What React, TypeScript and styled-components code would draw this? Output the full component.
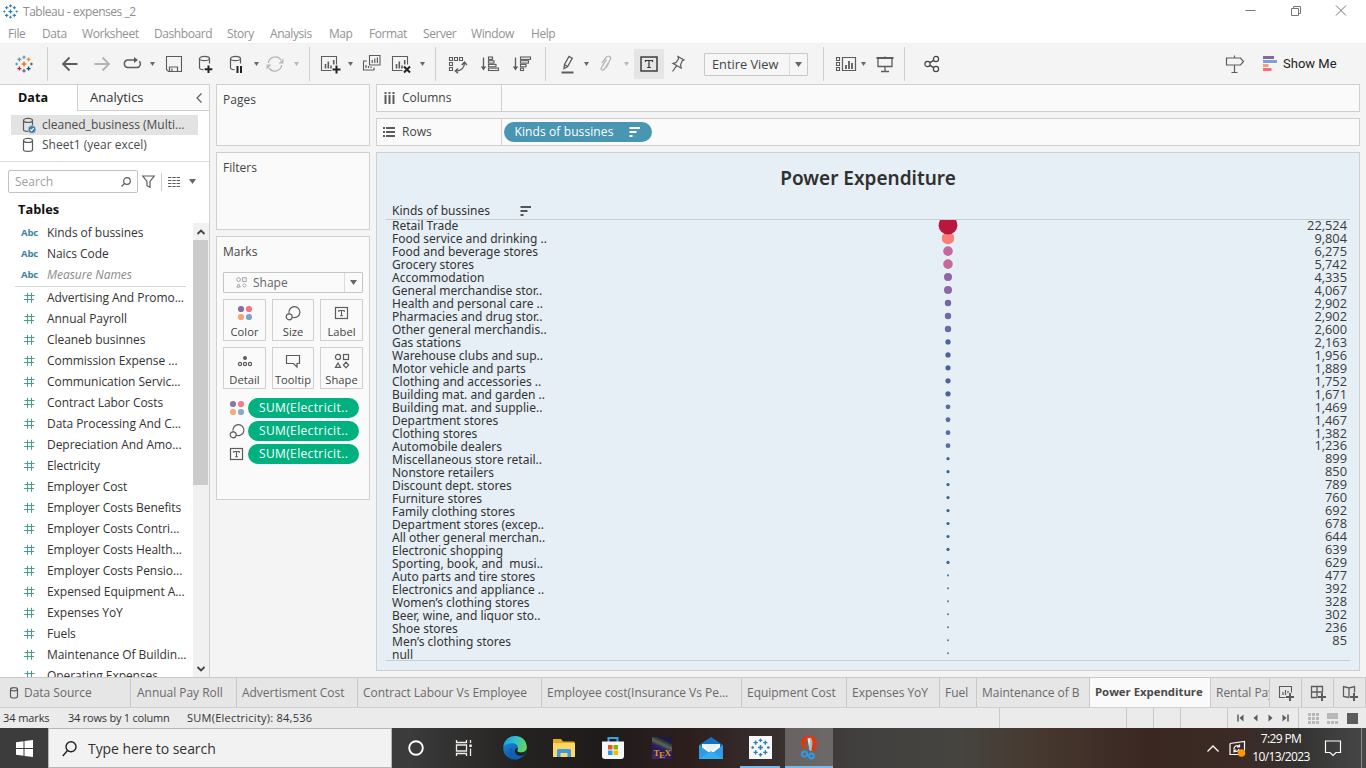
import React from 'react';
import styled, { createGlobalStyle } from 'styled-components';

const Global = createGlobalStyle`
  * { box-sizing: border-box; }
  html, body { margin: 0; padding: 0; }
  body { width: 1366px; height: 768px; overflow: hidden; background: #f4f4f4; }
  svg { display: block; flex: none; overflow: visible; }
`;

const LINE = '#d0d0d0';
const INK = '#5c5c5c';

const Window = styled.div`
  width: 1366px;
  height: 768px;
  display: flex;
  flex-direction: column;
  overflow: hidden;
  font: 12px/16px 'Open Sans', 'Noto Sans', sans-serif;
  color: #444;
  white-space: pre;
`;

/* ---------- title and menu ---------- */

const TitleBar = styled.div`
  height: 23px;
  flex: none;
  display: flex;
  align-items: center;
  background: #fff;
  padding: 0 20px 0 3px;
  color: #8f8f8f;
  letter-spacing: -0.46px;
`;
const TitleText = styled.div`
  margin-left: 5px;
  flex: 1;
`;
const WindowButtons = styled.div`
  display: flex;
  gap: 34px;
  padding-bottom: 3px;
`;
const MenuBar = styled.div`
  height: 20px;
  flex: none;
  display: flex;
  align-items: center;
  background: #fff;
  padding: 1px 0 0 8px;
  color: #929292;
  letter-spacing: -0.42px;
`;
const MenuItem = styled.div<{ $w: number }>`
  width: ${p => p.$w}px;
`;

/* ---------- toolbar ---------- */

const Toolbar = styled.div`
  height: 41px;
  flex: none;
  display: flex;
  align-items: center;
  background: #f4f4f4;
  border-top: 1px solid #f0f0f0;
`;
const Slot = styled.div<{ $ml: number; $w?: number }>`
  margin-left: ${p => p.$ml}px;
  width: ${p => p.$w ?? 20}px;
  flex: none;
`;
const Divider = styled.div<{ $ml: number }>`
  margin-left: ${p => p.$ml}px;
  width: 1px;
  height: 34px;
  flex: none;
  background: #cfcfcf;
`;
const ActiveTool = styled.div`
  margin-left: 5px;
  width: 30px;
  height: 30px;
  display: flex;
  align-items: center;
  justify-content: center;
  background: #e5e5e5;
`;
const ViewSelect = styled.div`
  margin-left: 16px;
  width: 104px;
  height: 23px;
  display: flex;
  align-items: center;
  border: 1px solid #c8c8c8;
  border-radius: 1px;
  background: #f6f6f6;
  font-size: 12.8px;
  color: #444;
`;
const ViewSelectText = styled.div`
  flex: 1;
  padding-left: 7px;
`;
const SelectArrow = styled.div<{ $w: number }>`
  width: ${p => p.$w}px;
  height: 100%;
  display: flex;
  align-items: center;
  justify-content: center;
  border-left: 1px solid #dcdcdc;
`;
const ShowMe = styled.div`
  margin-left: 6px;
  font: 13px/16px Roboto, sans-serif;
  color: #222;
`;

/* ---------- data pane ---------- */

const Main = styled.div`
  height: 593px;
  flex: none;
  display: flex;
`;
const DataPane = styled.div`
  width: 210px;
  display: flex;
  flex-direction: column;
  background: #fff;
  border-right: 1px solid ${LINE};
  overflow: hidden;
`;
const PaneTabs = styled.div`
  height: 27px;
  flex: none;
  display: flex;
  border-top: 1px solid ${LINE};
  font-size: 13px;
  line-height: 25px;
`;
const DataTab = styled.div`
  width: 78px;
  padding-left: 18px;
  border-right: 1px solid ${LINE};
  font-weight: 700;
  font-size: 12.6px;
  color: #111;
`;
const AnalyticsTab = styled.div`
  flex: 1;
  display: flex;
  align-items: center;
  justify-content: space-between;
  padding: 0 7px 0 12px;
  background: #fafafa;
  border-bottom: 1px solid ${LINE};
  color: #333;
`;
const Sources = styled.div`
  height: 51px;
  flex: none;
  padding: 4px 11px 0;
  border-bottom: 1px solid #dcdcdc;
`;
const Source = styled.div<{ $active?: boolean }>`
  height: 20px;
  display: flex;
  align-items: center;
  gap: 6px;
  padding-left: 11px;
  background: ${p => (p.$active ? '#e3e3e3' : 'transparent')};
  color: #4c4c4c;
`;
const SearchRow = styled.div`
  height: 39px;
  flex: none;
  display: flex;
  align-items: center;
  padding-left: 8px;
`;
const SearchBox = styled.div`
  width: 130px;
  height: 23px;
  display: flex;
  align-items: center;
  justify-content: space-between;
  padding: 0 6px;
  border: 1px solid #c2c2c2;
  border-radius: 2px;
  color: #a0a0a0;
`;
const SmallDivider = styled.div`
  width: 1px;
  height: 18px;
  margin: 0 6px;
  background: #cfcfcf;
`;
const TablesHeading = styled.div`
  height: 21px;
  flex: none;
  padding-left: 18px;
  font-size: 12.8px;
  font-weight: 700;
  color: #111;
`;
const FieldArea = styled.div`
  flex: 1;
  min-height: 0;
  display: flex;
`;
const Fields = styled.div`
  flex: 1;
  overflow: hidden;
  letter-spacing: -0.05px;
`;
const Field = styled.div<{ $muted?: boolean }>`
  height: 21px;
  display: grid;
  grid-template-columns: 26px 1fr;
  align-items: center;
  padding: 1px 0 0 21px;
  color: ${p => (p.$muted ? '#8a8a8a' : '#333')};
  font-style: ${p => (p.$muted ? 'italic' : 'normal')};
`;
const Abc = styled.span`
  font: 700 9.6px/14px 'Open Sans', sans-serif;
  letter-spacing: -0.2px;
  color: #3f7f9f;
`;
const FieldRule = styled.div`
  height: 1px;
  margin: 1px 7px 0 15px;
  background: #d8d8d8;
`;
const ScrollBar = styled.div`
  width: 16px;
  margin-top: 1px;
  display: flex;
  flex-direction: column;
  align-items: center;
  background: #f1f1f1;
`;
const ScrollThumb = styled.div`
  width: 15px;
  height: 245px;
  margin-bottom: auto;
  align-self: flex-start;
  background: #cbcbcb;
`;
const ScrollArrow = styled.div`
  height: 17px;
  display: flex;
  align-items: center;
`;

/* ---------- cards ---------- */

const Cards = styled.div`
  width: 154px;
  margin-left: 6px;
  display: flex;
  flex-direction: column;
  gap: 6px;
`;
const Card = styled.div<{ $h: number }>`
  height: ${p => p.$h}px;
  padding: 7px 6px 0;
  border: 1px solid ${LINE};
  background: #fafafa;
`;
const MarkSelect = styled.div`
  height: 21px;
  margin-top: 12px;
  display: flex;
  align-items: center;
  border: 1px solid #c6c6c6;
  border-radius: 1px;
  padding-left: 11px;
  color: #666;
`;
const MarkSelectText = styled.div`
  flex: 1;
  padding-left: 5px;
`;
const MarkButtons = styled.div`
  margin-top: 6px;
  display: grid;
  grid-template-columns: 43px 42px 43px;
  grid-auto-rows: 42px;
  gap: 6px;
`;
const MarkButton = styled.div`
  border: 1px solid ${LINE};
  display: flex;
  flex-direction: column;
  align-items: center;
  padding-top: 4px;
  gap: 2px;
  font-size: 11.2px;
  color: #444;
`;
const MarkRow = styled.div`
  height: 23px;
  display: flex;
  align-items: center;
  padding-left: 5px;
`;
const MarkRows = styled.div`
  padding-top: 7px;
`;
const GreenPill = styled.div`
  width: 111px;
  height: 20px;
  margin-left: 1px;
  padding-left: 11px;
  border-radius: 10px;
  background: #00b180;
  color: #fff;
  font-size: 12px;
  line-height: 19px;
  letter-spacing: 0.36px;
`;

/* ---------- shelves and view ---------- */

const Workspace = styled.div`
  width: 984px;
  margin-left: 6px;
  display: flex;
  flex-direction: column;
  gap: 6px;
`;
const Shelf = styled.div`
  height: 28px;
  flex: none;
  display: flex;
  align-items: center;
  border: 1px solid ${LINE};
  background: #fafafa;
`;
const ShelfLabel = styled.div`
  width: 125px;
  height: 100%;
  display: flex;
  align-items: center;
  gap: 6px;
  padding-left: 6px;
  border-right: 1px solid ${LINE};
`;
const BluePill = styled.div`
  width: 148px;
  height: 20px;
  margin-left: 2px;
  padding: 0 12px 0 10.5px;
  display: flex;
  align-items: center;
  justify-content: space-between;
  border-radius: 10px;
  background: #4996b2;
  color: #fff;
  letter-spacing: 0.1px;
`;
const View = styled.div`
  height: 519px;
  display: flex;
  flex-direction: column;
  border: 1px solid ${LINE};
  background: #e6eff5;
  padding: 0 9px;
  color: #333;
`;
const ViewTitle = styled.div`
  height: 49px;
  padding-top: 13px;
  text-align: center;
  font-size: 19px;
  font-family: 'Noto Sans', sans-serif;
  line-height: 24px;
  font-weight: 600;
  color: #303030;
`;
const HeaderRow = styled.div`
  height: 18px;
  display: flex;
  align-items: center;
  gap: 30px;
  padding-left: 6px;
  border-bottom: 1px solid #c6ccd0;
  font-family: 'Noto Sans', sans-serif;
`;
const Plot = styled.div`
  height: 441px;
  display: flex;
  border-bottom: 1px solid #c6ccd0;
`;
const RowLabels = styled.div`
  width: 161px;
  padding-left: 6px;
  margin-top: -1px;
  font: 12px/13px 'Noto Sans', sans-serif;
`;
const Marks = styled.div`
  flex: 1;
  overflow: hidden;
`;
const Values = styled.div`
  width: 60px;
  padding-right: 3px;
  margin-top: -1px;
  text-align: right;
  font-size: 12.8px;
  line-height: 12.97px;
  color: #3a3a3a;
`;

/* ---------- sheet tabs and status ---------- */

const SheetTabs = styled.div`
  height: 31px;
  flex: none;
  display: flex;
  border-top: 1px solid #c9c9c9;
  border-bottom: 1px solid ${LINE};
  background: #e6e6e6;
  line-height: 29px;
  letter-spacing: -0.03px;
  color: #6a6a6a;
`;
const SheetTab = styled.div<{ $w: number; $active?: boolean; $pl?: number }>`
  width: ${p => p.$w}px;
  flex: none;
  display: flex;
  overflow: hidden;
  padding-left: ${p => p.$pl ?? 5}px;
  border-right: 1px solid #c9c9c9;
  background: ${p => (p.$active ? '#fafafa' : 'transparent')};
  font-weight: ${p => (p.$active ? 700 : 400)};
  font-size: ${p => (p.$active ? 11.4 : 12)}px;
  line-height: ${p => (p.$active ? 27 : 29)}px;
  align-items: ${p => (p.$active ? 'flex-start' : 'center')};
  color: ${p => (p.$active ? '#4a4a4a' : 'inherit')};
`;
const NewSheet = styled.div`
  width: 32.3px;
  display: flex;
  align-items: center;
  justify-content: center;
  border-right: 1px solid #c9c9c9;
`;
const StatusBar = styled.div`
  height: 20px;
  flex: none;
  display: flex;
  background: #ebebeb;
  font-size: 11px;
  line-height: 20px;
  color: #333;
`;
const StatusText = styled.div<{ $w: number; $ls: number }>`
  width: ${p => p.$w}px;
  letter-spacing: ${p => p.$ls}px;
`;
const StatusCell = styled.div<{ $w: number }>`
  width: ${p => p.$w}px;
  display: flex;
  align-items: center;
  justify-content: space-evenly;
  border-left: 1px solid #c9c9c9;
`;

/* ---------- taskbar ---------- */

const TaskBar = styled.div`
  height: 40px;
  flex: none;
  display: flex;
  background: linear-gradient(90deg, #3c3c3c 0, #3b3b3b 410px, #242220 520px, #1f1b1b 600px, #2d1f1e 690px, #42403f 860px, #46443f 960px, #46382f 1040px, #3a2721 1150px, #3b2a25 1240px, #343332 1300px, #474747 1366px);
`;
const StartButton = styled.div`
  width: 48px;
  display: flex;
  align-items: center;
  justify-content: center;
`;
const TaskSearch = styled.div`
  width: 344px;
  display: flex;
  align-items: center;
  gap: 11px;
  padding: 1px 0 0 13px;
  background: #f2f2f2;
  border: 1px solid #b5b5b5;
  font-size: 14px;
  letter-spacing: -0.06px;
  color: #333;
`;
const TaskItem = styled.div<{ $w: number; $line?: boolean; $active?: boolean; $mx?: string }>`
  width: ${p => p.$w}px;
  margin: ${p => p.$mx ?? '0'};
  height: 40px;
  display: flex;
  align-items: center;
  justify-content: center;
  background: ${p => (p.$active ? 'rgba(255,255,255,.24)' : 'transparent')};
  border-bottom: ${p => (p.$line ? '2px solid #76b9ed' : '0')};
`;
const TexTile = styled.div`
  width: 20px;
  height: 22px;
  display: flex;
  align-items: flex-end;
  justify-content: center;
  background: linear-gradient(205deg, #1b1b40 20%, #5a6a4c 38%, #2c2168 50%, #251a58 62%, #4a2b6e);
  color: #d79a1e;
  font: 700 9px/12px 'Liberation Serif', serif;
  letter-spacing: -0.5px;
`;
const LowE = styled.span`
  position: relative;
  top: 2px;
`;
const Tray = styled.div`
  margin-left: auto;
  display: flex;
  align-items: center;
  padding-right: 4px;
`;
const Clock = styled.div`
  width: 74px;
  margin-left: -2px;
  text-align: center;
  color: #fff;
  font-size: 12px;
  line-height: 18px;
  letter-spacing: -0.62px;
`;
const DesktopEdge = styled.div`
  width: 1px;
  height: 40px;
  margin-left: 20px;
  background: #888;
`;

/* ---------- icons ---------- */

type IconProps = { w?: number; h?: number; c?: string; children: React.ReactNode };
const Icon = ({ w = 20, h = 20, c = INK, children }: IconProps) => (
  <svg width={w} height={h} viewBox={`0 0 ${w} ${h}`} fill="none" stroke={c} strokeWidth={1.2}>
    {children}
  </svg>
);

const Caret = ({ c = '#666', s = 5 }: { c?: string; s?: number }) => (
  <svg width={s} height={s === 5 ? 4 : 5} viewBox="0 0 8 5" preserveAspectRatio="none">
    <path d="M0 0H8L4 5Z" fill={c} />
  </svg>
);

const plus = (x: number, y: number, s: number) => `M${x - s} ${y}h${2 * s}M${x} ${y - s}v${2 * s}`;

const TableauMark = ({ size, colors }: { size: number; colors: string[] }) => (
  <svg width={size} height={size} viewBox="0 0 18 18" fill="none" strokeWidth={1.3}>
    <path d={plus(9, 9, 2.4)} stroke={colors[0]} strokeWidth={1.5} />
    <path d={plus(9, 2.2, 1.7)} stroke={colors[1]} />
    <path d={plus(9, 15.8, 1.7)} stroke={colors[2]} />
    <path d={plus(4.4, 4.4, 2)} stroke={colors[3]} />
    <path d={plus(13.6, 4.4, 2)} stroke={colors[4]} />
    <path d={plus(4.4, 13.6, 2)} stroke={colors[5]} />
    <path d={plus(13.6, 13.6, 2)} stroke={colors[6]} />
    <path d={plus(1.6, 9, 1.3)} stroke={colors[1]} />
    <path d={plus(16.4, 9, 1.3)} stroke={colors[2]} />
  </svg>
);
const BRAND = ['#e8762d', '#7299a6', '#5b6591', '#5b9bb0', '#eb912b', '#c72037', '#1f447e'];
const BLUES = Array(7).fill('#2f7fb5') as string[];

const Database = ({ children }: { children?: React.ReactNode }) => (
  <Icon>
    <path d="M3.5 4.5v9.2c0 1 1.4 1.8 4 1.9M13.5 4.5v5" />
    <ellipse cx="8.5" cy="4.5" rx="5" ry="2.2" />
    {children}
  </Icon>
);
const SourceIcon = ({ checked }: { checked?: boolean }) => (
  <Icon w={14} h={16}>
    <path d="M1.5 3.4v9.4c0 2.2 9 2.2 9 0V3.4" />
    <ellipse cx="6" cy="3.4" rx="4.5" ry="2" />
    {checked && (
      <>
        <circle cx="10" cy="12.4" r="3.9" fill="#3b7f9f" stroke="#e3e3e3" strokeWidth=".6" />
        <path d="M8.2 12.4l1.3 1.3 2.3-2.6" stroke="#fff" />
      </>
    )}
  </Icon>
);
const Sheet = ({ children }: { children?: React.ReactNode }) => (
  <Icon>
    <path d="M11.5 16.5h-10v-14h15v8" strokeWidth={1.1} />
    <path d="M5.5 10v4.500M8.300 7.500v7M11 11.500v3M13.700 6v4.500" strokeWidth={1.6} />
    {children}
  </Icon>
);
const ColorDots = ({ soft }: { soft?: boolean }) => (
  <svg width="18" height="18" viewBox="0 0 18 18" opacity={soft ? 0.92 : 1}>
    <circle cx="5" cy="5" r="3.1" fill="#876f9a" />
    <circle cx="13" cy="5" r="3.1" fill="#f9707f" />
    <circle cx="5" cy="13" r="3.1" fill="#f4a377" />
    <circle cx="13" cy="13" r="3.1" fill="#7ea3cc" />
  </svg>
);
const SizeIcon = () => (
  <Icon w={18} h={18}>
    <path d="M5.2 9.800a5.500 5.500 0 1 1 3.200 3.400" />
    <circle cx="5.2" cy="12.8" r="3" />
  </Icon>
);
const LabelIcon = () => (
  <Icon w={18} h={18}>
    <rect x="2.500" y="3.500" width="12" height="11" />
    <path d="M5.800 8V6.500h5.400V8M8.500 6.500v5.300M7.100 11.800h2.800" strokeWidth={1.1} />
  </Icon>
);
const ShapeIcon = ({ s = 18, c = INK }: { s?: number; c?: string }) => (
  <svg width={s} height={s} viewBox="0 0 18 18" fill="none" stroke={c} strokeWidth={1.2}>
    <circle cx="5" cy="5" r="2.6" />
    <rect x="10.5" y="2.5" width="5" height="5" />
    <path d="M2.500 15.4L5 11l2.500 4.400z" />
    <path d="M13 10.200l2.600 2.800-2.600 2.800-2.600-2.800z" />
  </svg>
);
const SortGlyph = ({ c }: { c: string }) => (
  <Icon w={11} h={10} c={c}>
    <path d="M.5 1h10.500M.5 5h7M.5 9h3" strokeWidth={1.8} />
  </Icon>
);
const HashIcon = () => (
  <Icon w={12} h={12} c="#3fa480">
    <path d="M1.500 3.500h10M1 7.500h10M4.500 .8v10M8.500 .8v10" strokeWidth={1} />
  </Icon>
);
const SortBars = ({ desc }: { desc?: boolean }) => {
  const ws = desc ? [10, 8, 5.5, 3] : [4, 5.5, 7.5, 10];
  return (
    <Icon>
      <path d="M3.500 3.500v11" strokeWidth={1.3} />
      <path d="M.8 12.500h5.400L3.500 16.500z" fill={INK} stroke="none" />
      {ws.map((w, i) => (
        <rect key={i} x="8.500" y={3 + i * 3.7} width={w} height="2.400" strokeWidth={1.1} />
      ))}
    </Icon>
  );
};

/* ---------- data ---------- */

const MENU: [string, number][] = [
  ['File', 34], ['Data', 40], ['Worksheet', 72], ['Dashboard', 73], ['Story', 43], ['Analysis', 59],
  ['Map', 40], ['Format', 54], ['Server', 48], ['Window', 60], ['Help', 40],
];
const MEASURES = [
  'Advertising And Promo...', 'Annual Payroll', 'Cleaneb businnes', 'Commission Expense ...',
  'Communication Servic...', 'Contract Labor Costs', 'Data Processing And C...', 'Depreciation And Amo...',
  'Electricity', 'Employer Cost', 'Employer Costs Benefits', 'Employer Costs Contri...',
  'Employer Costs Health...', 'Employer Costs Pensio...', 'Expensed Equipment A...', 'Expenses YoY',
  'Fuels', 'Maintenance Of Buildin...', 'Operating Expenses',
];
const ROWS: [string, string][] = [
  ['Retail Trade', '22,524'], ['Food service and drinking ..', '9,804'], ['Food and beverage stores', '6,275'],
  ['Grocery stores', '5,742'], ['Accommodation', '4,335'], ['General merchandise stor..', '4,067'],
  ['Health and personal care ..', '2,902'], ['Pharmacies and drug stor..', '2,902'],
  ['Other general merchandis..', '2,600'], ['Gas stations', '2,163'], ['Warehouse clubs and sup..', '1,956'],
  ['Motor vehicle and parts', '1,889'], ['Clothing and accessories ..', '1,752'],
  ['Building mat. and garden ..', '1,671'], ['Building mat. and supplie..', '1,469'],
  ['Department stores', '1,467'], ['Clothing stores', '1,382'], ['Automobile dealers', '1,236'],
  ['Miscellaneous store retail..', '899'], ['Nonstore retailers', '850'], ['Discount dept. stores', '789'],
  ['Furniture stores', '760'], ['Family clothing stores', '692'], ['Department stores (excep..', '678'],
  ['All other general merchan..', '644'], ['Electronic shopping', '639'], ['Sporting, book, and  musi..', '629'],
  ['Auto parts and tire stores', '477'], ['Electronics and appliance ..', '392'],
  ['Women’s clothing stores', '328'], ['Beer, wine, and liquor sto..', '302'], ['Shoe stores', '236'],
  ['Men’s clothing stores', '85'], ['null', ''],
];
const MARK_STEPS: [number, number, string][] = [
  [1, 9.4, '#b9173d'], [1, 6.2, '#fb7f78'], [2, 4.8, '#c5699d'], [2, 4, '#8f66a5'], [3, 3.2, '#7068a4'],
  [5, 2.6, '#4b6399'], [4, 2.4, '#5a6ca2'], [9, 1.6, '#386590'], [7, 1.05, '#5384a8'],
];
const MARKS = MARK_STEPS.flatMap(([n, r, c]) => Array.from({ length: n }, () => ({ r, c })));
const SHEETS: [string, number, number?][] = [
  ['Annual Pay Roll', 106, 6], ['Advertisment Cost', 121], ['Contract Labour Vs Employee', 184],
  ['Employee cost(Insurance Vs Pe...', 200], ['Equipment Cost', 105], ['Expenses YoY', 93], ['Fuel', 37],
  ['Maintenance of B', 113], ['Power Expenditure', 121], ['Rental Pay', 59],
];

export default function App() {
  return (
    <Window>
      <Global />
      <TitleBar>
        <TableauMark size={15} colors={BLUES} />
        <TitleText>Tableau - expenses _2</TitleText>
        <WindowButtons>
          <Icon w={11} h={11} c="#777"><path d="M.5 5.500h10" strokeWidth={1} /></Icon>
          <Icon w={11} h={11} c="#777"><path d="M1.500 3.500h7v7h-7zM3.500 3.500v-2h7v7h-2" strokeWidth={1} /></Icon>
          <Icon w={11} h={11} c="#777"><path d="M1 .5l10 10M11 .5l-10 10" strokeWidth={1} /></Icon>
        </WindowButtons>
      </TitleBar>
      <MenuBar>
        {MENU.map(([t, w]) => <MenuItem key={t} $w={w}>{t}</MenuItem>)}
      </MenuBar>

      <Toolbar>
        <Slot $ml={15} $w={18}><TableauMark size={18} colors={BRAND} /></Slot>
        <Divider $ml={14} />
        <Slot $ml={12}><Icon><path d="M17.500 10H3M9.500 3.500L3 10l6.500 6.500" strokeWidth={1.8} /></Icon></Slot>
        <Slot $ml={12}><Icon c="#b3b3b3"><path d="M2.500 10H17M10.500 3.500L17 10l-6.500 6.500" strokeWidth={1.8} /></Icon></Slot>
        <Slot $ml={10}>
          <Icon><path d="M13 6H5.500a3.800 3.800 0 0 0 0 7.500h9.200a3.600 3.600 0 0 0 2.500-6.300" strokeWidth={1.4} /><path d="M12 3L16 6l-4 3z" fill={INK} stroke="none" /></Icon>
        </Slot>
        <Slot $ml={8} $w={5}><Caret /></Slot>
        <Slot $ml={9}>
          <Icon><path d="M2.500 2.500h15v15h-13l-2-2z" strokeWidth={1.1} /><path d="M5.500 17v-4h8v4M8 17v-2.500" /></Icon>
        </Slot>
        <Slot $ml={12}><Database><path d={plus(12.5, 15.2, 3.8)} stroke="#222" strokeWidth={2} /></Database></Slot>
        <Slot $ml={11}><Database><path d="M10.500 12v7M14 12v7" stroke="#222" strokeWidth={2} /></Database></Slot>
        <Slot $ml={7} $w={5}><Caret /></Slot>
        <Slot $ml={6}>
          <Icon c="#b8b8b8"><path d="M3.300 9A7 7 0 0 1 16 6M16.700 11A7 7 0 0 1 4 14" strokeWidth={1.4} /><path d="M18.500 4.500v5h-5zM1.500 15.500v-5h5z" fill="#b8b8b8" stroke="none" /></Icon>
        </Slot>
        <Slot $ml={9} $w={5}><Caret c="#b8b8b8" /></Slot>
        <Divider $ml={10} />
        <Slot $ml={10}><Sheet><path d={plus(16.5, 15.5, 4)} stroke="#222" strokeWidth={2} /></Sheet></Slot>
        <Slot $ml={8} $w={5}><Caret /></Slot>
        <Slot $ml={9}>
          <Icon><path d="M7.500 1.500h10.500v9.500H7.500zM5 7H1.500v9H12v-2.500" strokeWidth={1.1} /><path d="M10.200 6v3M12.800 4.500V9M15.400 3.500V9M4 11v3M6.500 12v2M9 12.500V14" /></Icon>
        </Slot>
        <Slot $ml={9}><Sheet><path d="M13 12.500l6 6M19 12.500l-6 6" stroke="#222" strokeWidth={2} /></Sheet></Slot>
        <Slot $ml={9} $w={5}><Caret /></Slot>
        <Divider $ml={10} />
        <Slot $ml={12}>
          <Icon><path d="M1.500 3.500h3v3h-3zM6.500 3.500h3v3h-3zM11.500 3.500h3v3h-3zM1.500 8.500h3v3h-3zM1.500 13.500h3v3h-3z" strokeWidth={1.1} /><path d="M8 17c5 0 8.500-3 8.500-8.500M10 14.500L7.300 17l2.700 2.200M13.800 11l2.700-3 2.400 3" strokeWidth={1.4} /></Icon>
        </Slot>
        <Slot $ml={12}><SortBars /></Slot>
        <Slot $ml={12}><SortBars desc /></Slot>
        <Divider $ml={13} />
        <Slot $ml={13}>
          <Icon><path d="M2.500 18.500h12" strokeWidth={2} /><path d="M5.500 10.500L10 2.500l3.200 1.800L8.700 12.500 5 14.500zM5.500 10.500l3.200 2" strokeWidth={1.3} /></Icon>
        </Slot>
        <Slot $ml={5} $w={5}><Caret /></Slot>
        <Slot $ml={8}>
          <Icon c="#b8b8b8"><path d="M5 9L9 3.500c2.500-3 6-.5 4 2.500L7.500 15c-1.600 2.200-4.300.6-3-1.700L9.500 5.500M12 9l-3.500 5.500" strokeWidth={1.3} /></Icon>
        </Slot>
        <Slot $ml={7} $w={5}><Caret c="#b8b8b8" /></Slot>
        <ActiveTool>
          <Icon w={18} h={16} c="#333"><rect x="1" y="1" width="16" height="14" strokeWidth={1.4} /><path d="M5.500 6V4.500h7V6M9 4.500v7M7.200 11.500h3.600" /></Icon>
        </ActiveTool>
        <Slot $ml={4}>
          <Icon><path d="M10 2.500l6 3.500-1.800.8-1.600 4 .6 3.200L5 9.500l2.800-.8 2.700-3.500zM8.500 11.800L4.500 17.500" strokeWidth={1.2} /></Icon>
        </Slot>
        <ViewSelect>
          <ViewSelectText>Entire View</ViewSelectText>
          <SelectArrow $w={18}><Caret s={7} /></SelectArrow>
        </ViewSelect>
        <Divider $ml={15} />
        <Slot $ml={11} $w={22}>
          <Icon w={22}><path d="M1.500 3.500h3v3h-3zM1.500 8.500h3v3h-3zM1.500 13.500h3v3h-3z" strokeWidth={1.1} /><path d="M7.500 3.500h13v13h-13z" /><path d="M11 11v4M14 7v8M17 9v6" strokeWidth={1.8} /></Icon>
        </Slot>
        <Slot $ml={4} $w={5}><Caret /></Slot>
        <Slot $ml={9}>
          <Icon><path d="M1.500 4h17" strokeWidth={2} /><path d="M3 5v7.500h14V5M10 2.500V4M10 13v4M6 17.500h8" strokeWidth={1.3} /></Icon>
        </Slot>
        <Divider $ml={9} />
        <Slot $ml={18}>
          <Icon c="#444"><circle cx="4.500" cy="10" r="2.600" /><circle cx="13" cy="5" r="2.600" /><circle cx="13" cy="15" r="2.600" /><path d="M6.800 8.700l4-2.400M6.800 11.300l4 2.400" strokeWidth={1.4} /></Icon>
        </Slot>
        <Slot $ml={282}>
          <Icon><path d="M1.500 4h14l3 3.500-3 3.500h-14zM9.500 1.500V4M9.500 11v7M6.500 18.500h6" /></Icon>
        </Slot>
        <Slot $ml={18} $w={14}>
          <svg width="14" height="16" viewBox="0 0 14 16"><path d="M0 0h11v3H0z" fill="#85699c" /><path d="M0 4h14v3H0z" fill="#7ba3cf" /><path d="M0 8h5.500v3H0z" fill="#f4a27b" /><path d="M0 12h8.500v3H0z" fill="#fa6a7c" /></svg>
        </Slot>
        <ShowMe>Show Me</ShowMe>
      </Toolbar>

      <Main>
        <DataPane>
          <PaneTabs>
            <DataTab>Data</DataTab>
            <AnalyticsTab>Analytics<Icon w={6} h={10}><path d="M5.500 .5L1 5l4.500 4.500" /></Icon></AnalyticsTab>
          </PaneTabs>
          <Sources>
            <Source $active><SourceIcon checked />cleaned_business (Multi...</Source>
            <Source><SourceIcon />Sheet1 (year excel)</Source>
          </Sources>
          <SearchRow>
            <SearchBox>Search<Icon w={10} h={10}><circle cx="6" cy="4" r="3.300" /><path d="M3.600 6.400L.5 9.500" /></Icon></SearchBox>
            <Slot $ml={4} $w={13}><Icon w={13} h={13}><path d="M.8 1h11.400L8 6.500v5.700l-3-1.500V6.500z" /></Icon></Slot>
            <SmallDivider />
            <Icon w={12} h={10}><path d="M0 .5h12M0 3.500h12M0 6.500h12M0 9.500h12" strokeWidth={1.2} strokeDasharray="3.400 .9" /></Icon>
            <Slot $ml={9} $w={7}><Caret s={7} /></Slot>
          </SearchRow>
          <TablesHeading>Tables</TablesHeading>
          <FieldArea>
            <Fields>
              <Field><Abc>Abc</Abc>Kinds of bussines</Field>
              <Field><Abc>Abc</Abc>Naics Code</Field>
              <Field $muted><Abc>Abc</Abc>Measure Names</Field>
              <FieldRule />
              {MEASURES.map(m => (
                <Field key={m}><Slot $ml={2} $w={12}><HashIcon /></Slot>{m}</Field>
              ))}
            </Fields>
            <ScrollBar>
              <ScrollArrow><Icon w={8} h={6} c="#444"><path d="M.5 5L4 1.500 7.500 5" strokeWidth={1.8} /></Icon></ScrollArrow>
              <ScrollThumb />
              <ScrollArrow><Icon w={8} h={6} c="#444"><path d="M.5 1L4 4.500 7.500 1" strokeWidth={1.8} /></Icon></ScrollArrow>
            </ScrollBar>
          </FieldArea>
        </DataPane>

        <Cards>
          <Card $h={62}>Pages</Card>
          <Card $h={78}>Filters</Card>
          <Card $h={264}>
            Marks
            <MarkSelect>
              <ShapeIcon s={13} c="#999" />
              <MarkSelectText>Shape</MarkSelectText>
              <SelectArrow $w={18}><Caret s={7} /></SelectArrow>
            </MarkSelect>
            <MarkButtons>
              <MarkButton><ColorDots />Color</MarkButton>
              <MarkButton><SizeIcon />Size</MarkButton>
              <MarkButton><LabelIcon />Label</MarkButton>
              <MarkButton>
                <Icon w={18} h={18}><circle cx="9" cy="6" r="2" fill={INK} stroke="none" /><circle cx="4" cy="12" r="1.600" /><circle cx="9" cy="12" r="1.600" /><circle cx="14" cy="12" r="1.600" /></Icon>
                Detail
              </MarkButton>
              <MarkButton>
                <Icon w={18} h={18}><path d="M2.500 3.500h13v8H13v3.500l-3.500-3.500h-7z" /></Icon>
                Tooltip
              </MarkButton>
              <MarkButton><ShapeIcon />Shape</MarkButton>
            </MarkButtons>
            <MarkRows>
              <MarkRow><ColorDots soft /><Slot $ml={1} $w={111}><GreenPill>SUM(Electricit..</GreenPill></Slot></MarkRow>
              <MarkRow><SizeIcon /><Slot $ml={1} $w={111}><GreenPill>SUM(Electricit..</GreenPill></Slot></MarkRow>
              <MarkRow><LabelIcon /><Slot $ml={1} $w={111}><GreenPill>SUM(Electricit..</GreenPill></Slot></MarkRow>
            </MarkRows>
          </Card>
        </Cards>

        <Workspace>
          <Shelf>
            <ShelfLabel>
              <Icon w={13} h={12}><path d="M2.500 0v2M6.500 0v2M10.500 0v2M2.500 3v9M6.500 3v9M10.500 3v9" strokeWidth={2} /></Icon>
              Columns
            </ShelfLabel>
          </Shelf>
          <Shelf>
            <ShelfLabel>
              <Icon w={13} h={12}><path d="M0 2h2M0 6h2M0 10h2M3 2h9M3 6h9M3 10h9" strokeWidth={2} /></Icon>
              Rows
            </ShelfLabel>
            <BluePill>Kinds of bussines<SortGlyph c="#fff" /></BluePill>
          </Shelf>
          <View>
            <ViewTitle>Power Expenditure</ViewTitle>
            <HeaderRow>Kinds of bussines<SortGlyph c="#555" /></HeaderRow>
            <Plot>
              <RowLabels>{ROWS.map(([n]) => <div key={n}>{n}</div>)}</RowLabels>
              <Marks>
                <svg width="743" height="440" viewBox="0 0 743 440">
                  {MARKS.map((m, i) => (
                    <circle key={i} cx="401" cy={5.2 + i * 12.97} r={m.r} fill={m.c} />
                  )).reverse()}
                </svg>
              </Marks>
              <Values>{ROWS.map(([n, v]) => <div key={n}>{v}</div>)}</Values>
            </Plot>
          </View>
        </Workspace>
      </Main>

      <SheetTabs>
        <SheetTab $w={131} $pl={9}>
          <Icon w={10} h={12}><path d="M1.500 2v7.500c0 2 7 2 7 0V2" /><ellipse cx="5" cy="2.300" rx="3.500" ry="1.600" /></Icon>
          <Slot $ml={5} $w={80}>Data Source</Slot>
        </SheetTab>
        {SHEETS.map(([t, w, pl]) => (
          <SheetTab key={t} $w={w} $pl={pl} $active={t === 'Power Expenditure'}>{t}</SheetTab>
        ))}
        <NewSheet>
          <Icon w={16} h={16}><path d="M7.500 12.500h-6v-11h12v6" strokeWidth={1.1} /><path d="M5 7v3M7.500 5v5M10 6v2" /><path d={plus(12, 12, 4)} strokeWidth={2} /></Icon>
        </NewSheet>
        <NewSheet>
          <Icon w={16} h={16}><path d="M7.500 12.500h-6v-11h11v6M1.500 7h11M7 1.500v11" strokeWidth={1.3} /><path d={plus(12, 12, 4)} strokeWidth={2} /></Icon>
        </NewSheet>
        <NewSheet>
          <Icon w={16} h={16}><path d="M7 12.500l-5.500-1V1.500L7 3l5.500-1.500v6M7 3v9.500" strokeWidth={1.3} /><path d={plus(12, 12, 4)} strokeWidth={2} /></Icon>
        </NewSheet>
      </SheetTabs>

      <StatusBar>
        <Slot $ml={3} $w={0} />
        <StatusText $w={65} $ls={-0.1}>34 marks</StatusText>
        <StatusText $w={119} $ls={-0.22}>34 rows by 1 column</StatusText>
        <StatusText $w={812} $ls={0.24}>SUM(Electricity): 84,536</StatusText>
        <StatusCell $w={127} />
        <StatusCell $w={27} />
        <StatusCell $w={27} />
        <StatusCell $w={47} />
        <StatusCell $w={71}>
          <Icon w={7} h={8}><path d="M1 .5v7" strokeWidth={1.5} /><path d="M6.500 .5v7L2.500 4z" fill={INK} stroke="none" /></Icon>
          <Icon w={5} h={8}><path d="M4.500 .5v7L.5 4z" fill={INK} stroke="none" /></Icon>
          <Icon w={5} h={8}><path d="M.5 .5v7L4.500 4z" fill={INK} stroke="none" /></Icon>
          <Icon w={7} h={8}><path d="M6 .5v7" strokeWidth={1.5} /><path d="M.5 .5v7L4.500 4z" fill={INK} stroke="none" /></Icon>
        </StatusCell>
        <StatusCell $w={68}>
          <Icon w={11} h={11} c="#b8b8b8"><path d="M0 1.500h11M0 5.500h11M0 9.500h11" strokeWidth={3} strokeDasharray="3 1" /></Icon>
          <Icon w={11} h={11} c="#b8b8b8"><path d="M0 3h11" strokeWidth={6} /><path d="M0 9.500h11" strokeWidth={3} strokeDasharray="3 1" /></Icon>
          <Icon w={11} h={11}><path d="M0 5.500h11" strokeWidth={11} /></Icon>
        </StatusCell>
      </StatusBar>

      <TaskBar>
        <StartButton>
          <svg width="17" height="17" viewBox="0 0 17 17"><path d="M0 2.300L7.500 1.300V8H0zM8.500 1.100L17 0v8H8.500zM0 9h7.500v6.700L0 14.700zM8.500 9H17v8l-8.500-1.100z" fill="#fff" /></svg>
        </StartButton>
        <TaskSearch>
          <Icon w={15} h={16} c="#222"><circle cx="9" cy="5.800" r="5" strokeWidth={1.4} /><path d="M5.500 9.500L.8 15" strokeWidth={1.4} /></Icon>
          Type here to search
        </TaskSearch>
        <TaskItem $w={48}><Icon w={18} h={18} c="#fff"><circle cx="9" cy="9" r="6.800" strokeWidth={1.9} /></Icon></TaskItem>
        <TaskItem $w={48}>
          <Icon w={18} h={18} c="#eee"><path d="M1.500 1v2.500h10V1M1.500 17v-2.500h10V17M1.500 6h10v6h-10zM15.500 1v3M15.500 9.500V17" strokeWidth={1.3} /><path d="M14.300 5.500h2.500v2.500h-2.500z" fill="#eee" stroke="none" /></Icon>
        </TaskItem>
        <TaskItem $w={53}>
          <svg width="24" height="24" viewBox="0 0 24 24">
            <defs>
              <linearGradient id="edgeTop" x1="0" x2="1" y1=".4" y2=".6"><stop offset="0" stopColor="#1b9de2" /><stop offset=".5" stopColor="#35c1c9" /><stop offset="1" stopColor="#68d94a" /></linearGradient>
              <linearGradient id="edgeLow" x1="0" x2=".6" y1="0" y2="1"><stop offset="0" stopColor="#1f96e0" /><stop offset="1" stopColor="#0f4a9c" /></linearGradient>
            </defs>
            <circle cx="12" cy="12" r="11.800" fill="url(#edgeLow)" />
            <path d="M.5 10C2-3 23-4 23.800 11c.2 4-3 6-6.500 5.500-3-.4-3.500-1.700-2.800-2.800C17 9 10 4 .5 10z" fill="url(#edgeTop)" />
            <path d="M9 12c-1 5 4 9 10 6.500 2-.8 3-1.500 2.600-.8C19 22 13 24.500 9 22 5 19 5.500 13 9 12z" fill="#1260b0" />
            <path d="M14.500 13.700C13.800 14.800 14.300 16.100 17.300 16.500c2.700.3 5.200-.9 6.100-3l-2 5.300c-4 2.500-9 .5-9.500-3.500 0-2 1-3 2.200-3.600.6.600.7 1.300.4 2z" fill="#24211f" />
          </svg>
        </TaskItem>
        <TaskItem $w={46}>
          <svg width="22" height="20" viewBox="0 0 22 20"><path d="M0 1h8l2 2.500h11.500V19H0z" fill="#e9a91c" /><path d="M0 5h22v14H0z" fill="#ffd766" /><path d="M4 19v-6.500c0-1 .8-1.500 1.500-1.500h11c.8 0 1.500.6 1.500 1.500V19h-3.500v-4h-7v4z" fill="#3f9be0" /></svg>
        </TaskItem>
        <TaskItem $w={52}>
          <svg width="24" height="24" viewBox="0 0 24 24"><path d="M7.500 6V2h9v4" fill="none" stroke="#3ba3e8" strokeWidth="2" /><path d="M1 5.500h22V20a3 3 0 0 1-3 3H4a3 3 0 0 1-3-3z" fill="#f7f7f7" /><path d="M7 9h4.500v4.500H7z" fill="#f05025" /><path d="M12.500 9H17v4.500h-4.500z" fill="#7eb900" /><path d="M7 14.500h4.500V19H7z" fill="#20a3ec" /><path d="M12.500 14.500H17V19h-4.500z" fill="#fdb900" /></svg>
        </TaskItem>
        <TaskItem $w={46}><TexTile>T<LowE>E</LowE>X</TexTile></TaskItem>
        <TaskItem $w={52}>
          <svg width="24" height="22" viewBox="0 0 24 22"><path d="M0 8L12 0l12 8v14H0z" fill="#1272c4" /><path d="M3 7h18v8H3z" fill="#fff" /><path d="M3 7h18l-9 8z" fill="#e7eef5" /><path d="M0 8l12 9 12-9v14H0z" fill="#2f9be8" /><path d="M0 22l12-8 12 8z" fill="#35aef0" /></svg>
        </TaskItem>
        <TaskItem $w={40} $mx="0 5px 0 3px" $line>
          <svg width="23" height="23" viewBox="0 0 23 23"><path d="M0 0h23v23H0z" fill="#f7f7f7" /><svg x="2" y="2" width="19" height="19"><TableauMark size={19} colors={BLUES} /></svg></svg>
        </TaskItem>
        <TaskItem $w={48} $line $active>
          <svg width="22" height="25" viewBox="0 0 22 25"><path d="M5 14C0 6 5 0 12 .5c8 .5 9 10 4.500 16l-3-2.500c3-4 1-9-2.500-9-4 0-5 4-3 9z" fill="#d83b12" /><path d="M9.500 3.500l2.500-.5 1.500 13-2-1z" fill="#e8e8e8" /><path d="M12.500 2c2.500 3 2.500 9 0 14l-1.500-3z" fill="#b5b5b5" /><circle cx="6.500" cy="19" r="2.600" fill="none" stroke="#2e9be6" strokeWidth="2" /><circle cx="13.500" cy="21" r="2.400" fill="none" stroke="#2e9be6" strokeWidth="2" /></svg>
        </TaskItem>
        <Tray>
          <Icon w={12} h={7} c="#fff"><path d="M.5 6.500L6 1l5.500 5.500" strokeWidth={1.3} /></Icon>
          <Slot $ml={10} $w={17}>
            <Icon w={17} h={17} c="#fff"><path d="M1 3.500L15.500 1.500v9M9 14.500H1v-11M1 3.500" /><path d="M5 9a3 3 0 0 1 5-2.500M10.500 4.500v2.500H8M10 9a3 3 0 0 1-4.500 2M5 12.500V10h2.300" /><circle cx="12.500" cy="13" r="3.800" fill="#ff9800" stroke="none" /></Icon>
          </Slot>
          <Clock>7:29 PM<br />10/13/2023</Clock>
          <Slot $ml={7} $w={16}><Icon w={16} h={16} c="#fff"><path d="M.5 1h15v11.500H11L8 15.500l-3-3H.5z" /></Icon></Slot>
          <DesktopEdge />
        </Tray>
      </TaskBar>
    </Window>
  );
}
